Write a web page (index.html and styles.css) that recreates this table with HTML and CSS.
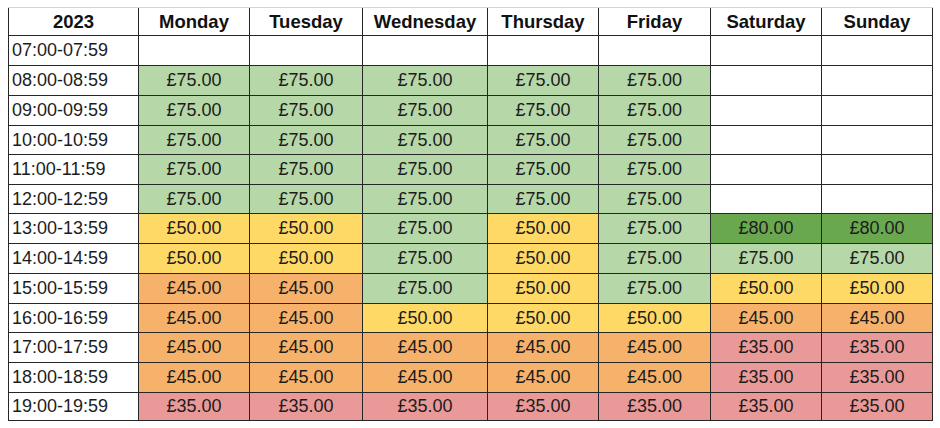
FILE: index.html
```html
<!DOCTYPE html>
<html>
<head>
<meta charset="utf-8">
<link rel="stylesheet" href="styles.css">
</head>
<body>
<div class="sheet">
  <div class="c hd">2023</div><div class="c hd">Monday</div><div class="c hd">Tuesday</div><div class="c hd">Wednesday</div><div class="c hd">Thursday</div><div class="c hd">Friday</div><div class="c hd">Saturday</div><div class="c hd">Sunday</div>

  <div class="c t">07:00-07:59</div><div class="c"></div><div class="c"></div><div class="c"></div><div class="c"></div><div class="c"></div><div class="c"></div><div class="c"></div>

  <div class="c t">08:00-08:59</div><div class="c g">£75.00</div><div class="c g">£75.00</div><div class="c g">£75.00</div><div class="c g">£75.00</div><div class="c g">£75.00</div><div class="c"></div><div class="c"></div>

  <div class="c t">09:00-09:59</div><div class="c g">£75.00</div><div class="c g">£75.00</div><div class="c g">£75.00</div><div class="c g">£75.00</div><div class="c g">£75.00</div><div class="c"></div><div class="c"></div>

  <div class="c t">10:00-10:59</div><div class="c g">£75.00</div><div class="c g">£75.00</div><div class="c g">£75.00</div><div class="c g">£75.00</div><div class="c g">£75.00</div><div class="c"></div><div class="c"></div>

  <div class="c t">11:00-11:59</div><div class="c g">£75.00</div><div class="c g">£75.00</div><div class="c g">£75.00</div><div class="c g">£75.00</div><div class="c g">£75.00</div><div class="c"></div><div class="c"></div>

  <div class="c t">12:00-12:59</div><div class="c g">£75.00</div><div class="c g">£75.00</div><div class="c g">£75.00</div><div class="c g">£75.00</div><div class="c g">£75.00</div><div class="c"></div><div class="c"></div>

  <div class="c t">13:00-13:59</div><div class="c y">£50.00</div><div class="c y">£50.00</div><div class="c g">£75.00</div><div class="c y">£50.00</div><div class="c g">£75.00</div><div class="c dg">£80.00</div><div class="c dg">£80.00</div>

  <div class="c t">14:00-14:59</div><div class="c y">£50.00</div><div class="c y">£50.00</div><div class="c g">£75.00</div><div class="c y">£50.00</div><div class="c g">£75.00</div><div class="c g">£75.00</div><div class="c g">£75.00</div>

  <div class="c t">15:00-15:59</div><div class="c o">£45.00</div><div class="c o">£45.00</div><div class="c g">£75.00</div><div class="c y">£50.00</div><div class="c g">£75.00</div><div class="c y">£50.00</div><div class="c y">£50.00</div>

  <div class="c t">16:00-16:59</div><div class="c o">£45.00</div><div class="c o">£45.00</div><div class="c y">£50.00</div><div class="c y">£50.00</div><div class="c y">£50.00</div><div class="c o">£45.00</div><div class="c o">£45.00</div>

  <div class="c t">17:00-17:59</div><div class="c o">£45.00</div><div class="c o">£45.00</div><div class="c o">£45.00</div><div class="c o">£45.00</div><div class="c o">£45.00</div><div class="c r">£35.00</div><div class="c r">£35.00</div>

  <div class="c t">18:00-18:59</div><div class="c o">£45.00</div><div class="c o">£45.00</div><div class="c o">£45.00</div><div class="c o">£45.00</div><div class="c o">£45.00</div><div class="c r">£35.00</div><div class="c r">£35.00</div>

  <div class="c t">19:00-19:59</div><div class="c r">£35.00</div><div class="c r">£35.00</div><div class="c r">£35.00</div><div class="c r">£35.00</div><div class="c r">£35.00</div><div class="c r">£35.00</div><div class="c r">£35.00</div>
</div>
</body>
</html>
```

FILE: styles.css
```css
html, body {
  margin: 0;
  background: #ffffff;
}
body {
  padding: 7px 0 0 8px;
  font-family: "Liberation Sans", Arial, sans-serif;
}
.sheet {
  display: inline-grid;
  grid-template-columns: 129px 110px 112px 124px 110px 111px 110px 110px;
  grid-template-rows: 27px 29px 29px 29px 28px 29px 28px 29px 29px 29px 28px 29px 29px 27px;
  gap: 1px;
  background: #262626;
  padding: 0 1px 1px 1px;
  border-top: 1px solid #d4d4d4;
}
.c {
  background: #ffffff;
  display: flex;
  align-items: center;
  justify-content: center;
  font-size: 18px;
  color: #1c1c1c;
  white-space: nowrap;
  overflow: hidden;
}
.hd {
  font-weight: bold;
  font-size: 18.5px;
  color: #111111;
}
.t {
  justify-content: flex-start;
  padding-left: 3px;
}
.g { background: #b6d7a8; }
.dg { background: #6aa84f; }
.y { background: #ffd966; }
.o { background: #f6b26b; }
.r { background: #ea9999; }
```
